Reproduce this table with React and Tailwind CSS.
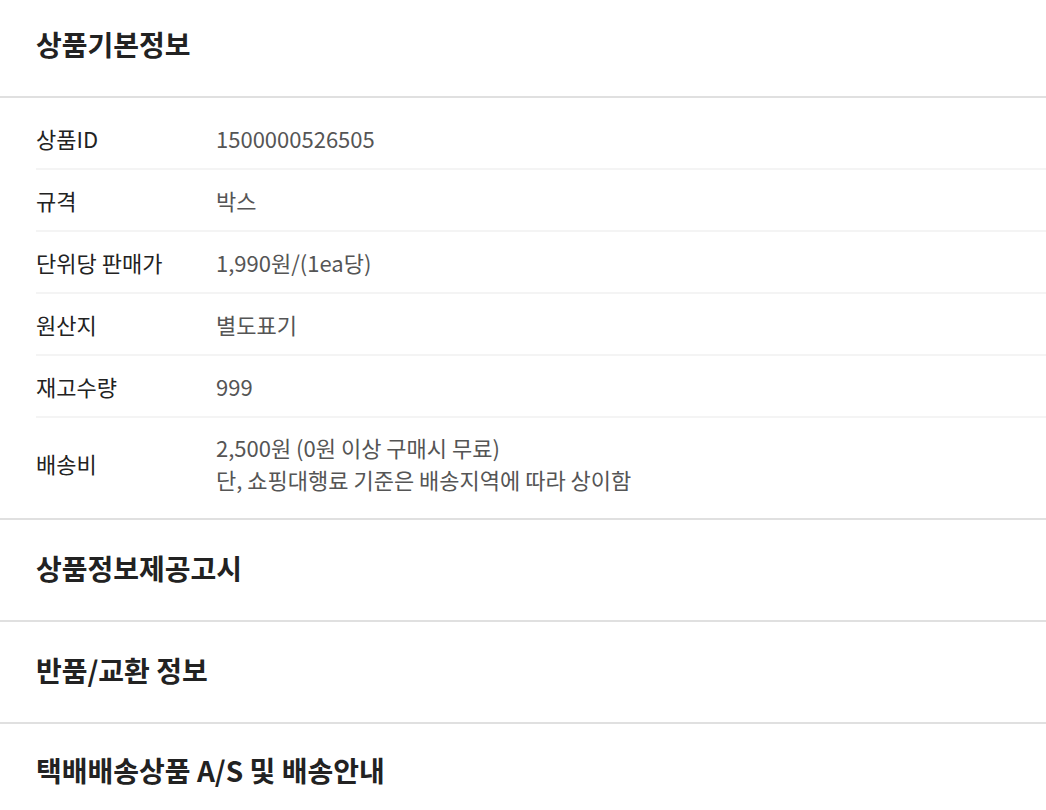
import React from 'react';

const rows = [
  { label: '상품ID', value: ['1500000526505'] },
  { label: '규격', value: ['박스'] },
  { label: '단위당 판매가', value: ['1,990원/(1ea당)'] },
  { label: '원산지', value: ['별도표기'] },
  { label: '재고수량', value: ['999'] },
  { label: '배송비', value: ['2,500원 (0원 이상 구매시 무료)', '단, 쇼핑대행료 기준은 배송지역에 따라 상이함'] },
];

const SectionTitle = ({ children, className = '' }) => (
  <div className={`px-9 flex items-center border-b-2 border-[#e0e0e0] ${className}`}>
    <h2 className="text-[28px] font-bold text-[#222]">{children}</h2>
  </div>
);

export default function App() {
  return (
    <div
      className="w-[1046px] bg-white"
      style={{ fontFamily: '"Noto Sans CJK KR", "Noto Sans", sans-serif' }}
    >
      {/* 상품기본정보 */}
      <SectionTitle className="h-[98px] pb-[8px]">상품기본정보</SectionTitle>
      <div className="pl-9 pt-[10px] pb-[10px] border-b-2 border-[#e0e0e0]">
        {rows.map((row, i) => (
          <div
            key={row.label}
            className={`flex items-center ${i < rows.length - 1 ? 'min-h-[62px] border-b-2 border-[#f4f4f4]' : 'py-[13px]'}`}
          >
            <div className="w-[180px] shrink-0 text-[22px] text-[#222]">{row.label}</div>
            <div className="text-[22px] text-[#555] leading-[32px]">
              {row.value.map((v) => (
                <div key={v}>{v}</div>
              ))}
            </div>
          </div>
        ))}
      </div>

      <SectionTitle className="h-[102px] pb-[4px]">상품정보제공고시</SectionTitle>
      <SectionTitle className="h-[102px] pb-[4px]">반품/교환 정보</SectionTitle>
      <div className="px-9 h-[96px] pb-[4px] flex items-center">
        <h2 className="text-[28px] font-bold text-[#222]">택배배송상품 A/S 및 배송안내</h2>
      </div>
    </div>
  );
}
